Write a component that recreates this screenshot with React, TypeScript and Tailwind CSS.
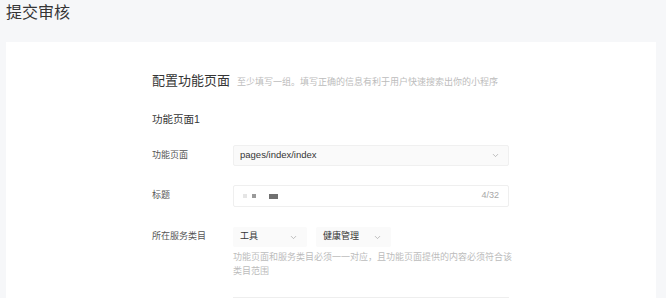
import { ChevronDown } from "lucide-react"

const font = { fontFamily: '"Liberation Sans", "Noto Sans CJK SC", sans-serif' }

function Row({ label, h, children }: { label: string; h: string; children: React.ReactNode }) {
  return (
    <div className="flex items-start">
      <div className={`flex w-[81px] shrink-0 items-center text-[9px] text-[#555] ${h}`}>{label}</div>
      <div className="min-w-0 flex-1">{children}</div>
    </div>
  )
}

export default function App() {
  return (
    <div className="h-[298px] w-[666px] overflow-hidden bg-[#f6f7f9]" style={font}>
      <h1 className="pl-[6px] text-[16px] leading-[26px] text-[#353535]">提交审核</h1>

      <div className="ml-[6px] mr-[10px] mt-[16px] h-[400px] bg-white pl-[146px] pr-[147px] pt-[29px]">
        <div className="flex items-baseline gap-[7px] whitespace-nowrap">
          <span className="text-[13px] leading-[20px] text-[#353535]">配置功能页面</span>
          <span className="text-[9px] text-[#bcbcbc]">至少填写一组。填写正确的信息有利于用户快速搜索出你的小程序</span>
        </div>

        <div className="mt-[20px] text-[10.5px] leading-[16px] text-[#353535]">功能页面1</div>

        <div className="mt-[18px]">
          <Row label="功能页面" h="h-[21px]">
            <div className="flex h-[21px] items-center justify-between rounded-[2px] border border-[#f0f0f0] bg-[#fafafa] pl-[6px] pr-[8px] text-[9.5px] text-[#353535]">
              <span>pages/index/index</span>
              <ChevronDown className="h-[9px] w-[9px] text-[#aaa]" />
            </div>
          </Row>

          <div className="mt-[19px]">
            <Row label="标题" h="h-[22px]">
              <div className="flex h-[22px] items-center justify-between rounded-[2px] border border-[#efefef] pl-[9px] pr-[9px] text-[9px]">
                <div className="flex items-center gap-[5px]">
                  <span className="h-[4px] w-[4px] bg-[#e5e5e5]" />
                  <span className="h-[4px] w-[4px] bg-[#9a9a9a]" />
                  <span className="ml-[8px] h-[5px] w-[9px] bg-[#707070]" />
                </div>
                <span className="text-[#a8a8a8]">4/32</span>
              </div>
            </Row>
          </div>

          <div className="mt-[20px]">
            <Row label="所在服务类目" h="h-[20px]">
              <div className="flex gap-[9px]">
                <div className="flex h-[20px] w-[74px] items-center justify-between rounded-[2px] bg-[#fafafa] pl-[7px] pr-[9px] text-[9px] text-[#353535]">
                  <span>工具</span>
                  <ChevronDown className="h-[9px] w-[9px] text-[#aaa]" />
                </div>
                <div className="flex h-[20px] w-[75px] items-center justify-between rounded-[2px] bg-[#fafafa] pl-[7px] pr-[9px] text-[9px] text-[#353535]">
                  <span>健康管理</span>
                  <ChevronDown className="h-[9px] w-[9px] text-[#aaa]" />
                </div>
              </div>
              <p className="mt-[3px] w-[281px] text-[9px] leading-[14px] text-[#bcbcbc]">
                功能页面和服务类目必须一一对应，且功能页面提供的内容必须符合该类目范围
              </p>
              <div className="mt-[19px] border-t border-[#eeeeee]" />
            </Row>
          </div>
        </div>
      </div>
    </div>
  )
}
